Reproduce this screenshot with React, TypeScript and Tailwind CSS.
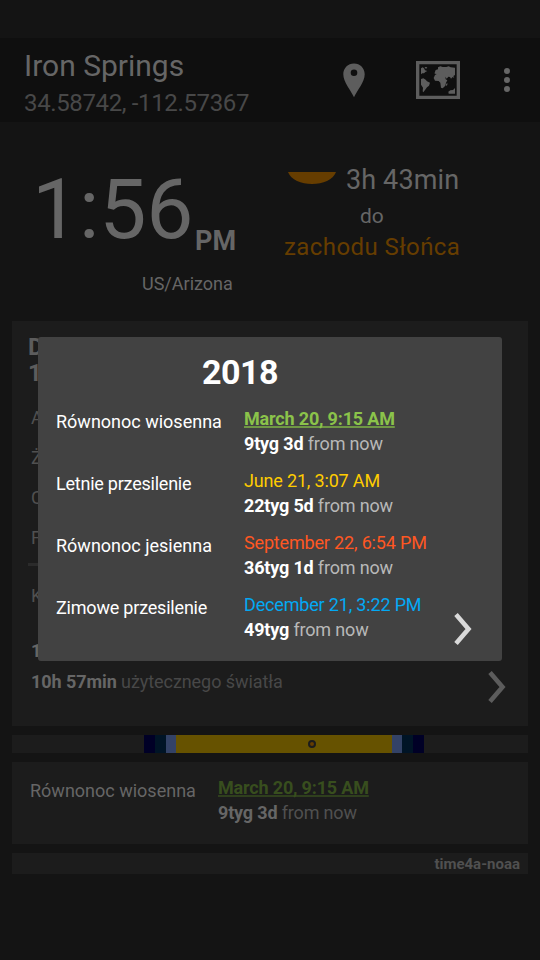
import type { ReactNode } from 'react';

type Season = { name: string; nameClass: string; date: string; color: string; left: string };

const seasons: Season[] = [
  { name: 'Równonoc wiosenna', nameClass: '', date: 'March 20, 9:15 AM', color: 'text-[#8bc34a] font-bold underline decoration-[#6f9745] decoration-2 underline-offset-1 [text-decoration-skip-ink:none]', left: '9tyg 3d' },
  { name: 'Letnie przesilenie', nameClass: 'tracking-[-0.23px]', date: 'June 21, 3:07 AM', color: 'text-[#ffcc00]', left: '22tyg 5d' },
  { name: 'Równonoc jesienna', nameClass: '', date: 'September 22, 6:54 PM', color: 'text-[#ff5722]', left: '36tyg 1d' },
  { name: 'Zimowe przesilenie', nameClass: 'tracking-[-0.2px]', date: 'December 21, 3:22 PM', color: 'text-[#03a9f4]', left: '49tyg' },
];

function PinIcon() {
  return (
    <svg width="22" height="35" viewBox="0 0 22 35" fill="#5d5d5d">
      <path fillRule="evenodd" d="M11 0.5C5 .5.3 5.200 .3 11.200C.3 19 8 27.500 11 34.300C14 27.500 21.700 19 21.700 11.200C21.700 5.200 17 .5 11 .5ZM11 6.500a3.300 3.300 0 1 1 0 6.600a3.300 3.300 0 0 1 0-6.600Z" />
    </svg>
  );
}

function MapIcon() {
  return (
    <svg width="44" height="38" viewBox="0 0 132 114" fill="#5d5d5d">
      <path fillRule="evenodd" d="M0 0H132V114H0ZM10 10V104H122V10Z" />
      <path d="M15 22L20 19L24 22L27 28L34 30L28 33L24 37L19 37L15 40ZM27 18L34 19L31 23L26 21ZM15 54L22 52L29 56L33 61L42 65L39 74L33 79L27 87L22 94L20 91L21 80L15 71Z" />
      <path d="M56 35L59 27L66 25L66 19L73 16L80 18L91 18L98 16L104 19L117 20V42L112 45L115 51L110 48L105 53L102 48L97 47L92 53L88 47L89 55L94 58L90 65L88 74L80 82L75 80L73 65L68 60L57 59L53 51L57 42L62 39L56 38Z" />
      <path d="M90 70L94 65L94 72L90 75ZM97 92L103 88L111 87L117 81V98H98Z" />
    </svg>
  );
}

function Chevron({ color }: { color: string }) {
  return (
    <svg width="18" height="34" viewBox="0 0 18 34" fill="none" stroke={color} strokeWidth="4.6">
      <path d="M2 2.500L14.500 17L2 31.500" />
    </svg>
  );
}

function Line({ className, children }: { className: string; children: ReactNode }) {
  return <div className={`whitespace-nowrap ${className}`}>{children}</div>;
}

function SeasonPopup() {
  return (
    <div className="absolute left-[38px] top-[337px] h-[324px] w-[464px] rounded-[3px] bg-[#424242] pl-[18px] pt-[15px] text-white">
      <h2 className="h-[54px] pl-[146px] text-[34px] leading-[40px] font-bold tracking-[-0.5px]">2018</h2>
      <div className="flex flex-col">
        {seasons.map((s) => (
          <div key={s.name} className="flex h-[62px] text-[18px] leading-[25px]">
            <Line className={`w-[188px] pt-[3px] ${s.nameClass}`}>{s.name}</Line>
            <div className="tracking-[-0.17px]">
              <Line className={s.color}>{s.date}</Line>
              <Line className="text-[#b8b8b8]"><b className="text-white">{s.left}</b> from now</Line>
            </div>
          </div>
        ))}
      </div>
      <div className="absolute left-[416px] top-[275px]"><Chevron color="#d9d9d9" /></div>
    </div>
  );
}

export default function App() {
  return (
    <div className="relative flex h-[960px] w-[540px] flex-col overflow-hidden bg-[#141414] pt-[38px] font-['Roboto',sans-serif] text-[#666]">
      <header className="flex h-[84px] shrink-0 bg-[#0f0f0f] pl-6">
        <div className="w-[319px] pt-[10px]">
          <Line className="text-[30px] leading-[36px]">Iron Springs</Line>
          <Line className="pt-px text-[24px] leading-[36px] tracking-[-0.36px] text-[#484848]">34.58742, -112.57367</Line>
        </div>
        <div className="w-[73px] pt-[25px]"><PinIcon /></div>
        <div className="w-[88px] pt-[23px]"><MapIcon /></div>
        <div className="flex flex-col gap-[3px] pt-[30px]">
          <i className="size-[6px] rounded-full bg-[#666]" />
          <i className="size-[6px] rounded-full bg-[#666]" />
          <i className="size-[6px] rounded-full bg-[#666]" />
        </div>
      </header>

      <section className="flex h-[199px] shrink-0">
        <div className="w-[284px] pl-[32px] pt-[37px]">
          <div className="flex h-[105px]">
            <Line className="w-[163px] pt-px text-[84px] leading-[100px] tracking-[-0.2px]">1:56</Line>
            <Line className="pt-[66px] text-[27px] leading-[32px] font-bold">PM</Line>
          </div>
          <Line className="pl-[110px] text-[18px] leading-[40px]">US/Arizona</Line>
        </div>
        <div className="w-[180px] pt-[40px]">
          <div className="flex h-[36px]">
            <svg className="ml-1 mt-[10px]" width="48" height="12" viewBox="0 0 48 12"><path d="M0 0H48C45 8 35 12 24 12S3 8 0 0Z" fill="#663d00" /></svg>
            <Line className="pl-[10px] text-[27px] leading-[36px] tracking-[0.12px]">3h 43min</Line>
          </div>
          <Line className="pl-[76px] text-[21px] leading-[36px]">do</Line>
          <Line className="text-[24px] leading-[26px] tracking-[0.42px] text-[#663d00]">zachodu Słońca</Line>
        </div>
      </section>

      <main className="mx-3 flex flex-col gap-[9px]">
        <section className="h-[405px] bg-[#1c1c1c] pt-[13px]">
          <div className="h-[65px] pl-4 text-[24px] leading-[26px] font-bold text-[#5c5c5c]"><div>D</div><div>1</div></div>
          <div className="h-[165px] pl-[19px] text-[18px] leading-[40px] text-[#505050]">
            <div className="-mt-[1px]">A</div><div>Ż</div><div>C</div><div>F</div>
          </div>
          <div className="ml-4 h-[3px] w-[460px] bg-[#2b2b2b]" />
          <div className="pl-[19px] text-[18px] leading-[24px]">
            <div className="h-[55px] pt-[18px] text-[#505050]">K</div>
            <div className="h-[31px] pt-[18px] font-bold">1</div>
          </div>
          <div className="flex justify-between pl-[19px] pr-[22px] pt-[18px]">
            <Line className="text-[18px] leading-[24px] tracking-[-0.07px] text-[#484848]"><b className="text-[#666]">10h 57min</b> użytecznego światła</Line>
            <Chevron color="#5c5c5c" />
          </div>
        </section>

        <div className="flex h-[18px] bg-[#1c1c1c] pl-[132px]">
          <i className="w-[11px] bg-[#000026]" />
          <i className="w-[11px] bg-[#001426]" />
          <i className="w-[10px] bg-[#334266]" />
          <div className="flex w-[216px] items-center bg-[#665200] pl-[132px]">
            <i className="size-[8px] rounded-full border-2 border-[#1c1c1c] bg-[#663d00]" />
          </div>
          <i className="w-[10px] bg-[#334266]" />
          <i className="w-[11px] bg-[#001426]" />
          <i className="w-[11px] bg-[#000026]" />
        </div>

        <section className="flex h-[82px] bg-[#1c1c1c] pl-[18px] pt-[13px] text-[18px] leading-[25px]">
          <Line className="w-[188px] pt-[3px]">Równonoc wiosenna</Line>
          <div className="tracking-[-0.17px]">
            <Line className="font-bold text-[#384e1e] underline decoration-[#2f3f1d] decoration-2 underline-offset-1 [text-decoration-skip-ink:none]">March 20, 9:15 AM</Line>
            <Line className="text-[#505050]"><b className="text-[#666]">9tyg 3d</b> from now</Line>
          </div>
        </section>

        <footer className="h-[21px] bg-[#1c1c1c] pr-[8px] text-right text-[15px] leading-[22px] font-bold text-[#505050]">time4a-noaa</footer>
      </main>

      <SeasonPopup />
    </div>
  );
}
